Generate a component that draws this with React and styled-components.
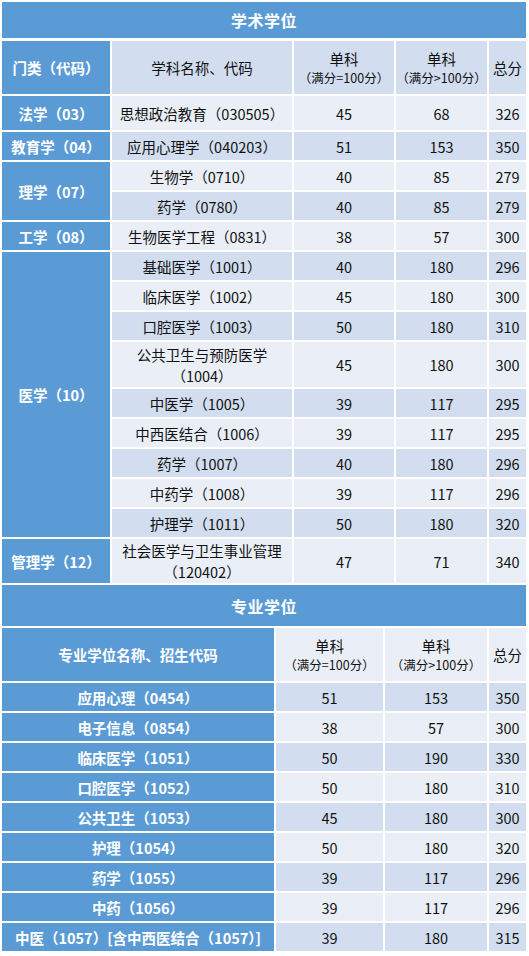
import React from "react";
import styled, { createGlobalStyle } from "styled-components";

const GlobalStyle = createGlobalStyle`
  html, body { margin: 0; padding: 0; background: #ffffff; }
  body { font-family: "Noto Sans CJK SC", "Noto Sans", sans-serif; }
`;

const BLUE = "#5b9bd5";
const DARK = "#d2deef";
const LIGHT = "#eaeff7";

const Page = styled.div`
  width: 524px;
  padding: 2px 0 0 2px;
  display: flex;
  flex-direction: column;
`;

const TitleBar = styled.div`
  height: ${(p) => p.$h}px;
  margin-bottom: ${(p) => p.$mb}px;
  background: ${BLUE};
  color: #ffffff;
  font-weight: 700;
  font-size: 16px;
  display: flex;
  align-items: center;
  justify-content: center;
  letter-spacing: 0.5px;
`;

const Grid = styled.div`
  display: grid;
  grid-template-columns: ${(p) => p.$cols};
  grid-template-rows: ${(p) => p.$rows};
  gap: 2px;
  margin-bottom: ${(p) => p.$mb || 0}px;
`;

const bg = { side: BLUE, head: DARK, head2: LIGHT, dark: DARK, light: LIGHT };

const Cell = styled.div`
  grid-row: ${(p) => (p.$span ? `span ${p.$span}` : "auto")};
  background: ${(p) => bg[p.$v]};
  color: ${(p) => (p.$v === "side" ? "#ffffff" : "#111111")};
  font-weight: ${(p) => (p.$v === "side" ? 700 : 400)};
  font-size: 14.5px;
  line-height: 21px;
  display: flex;
  flex-direction: column;
  align-items: center;
  justify-content: center;
  text-align: center;
  white-space: nowrap;
`;

const Main = styled.span`
  font-size: 14.5px;
  line-height: 21px;
`;

const Sub = styled.span`
  font-size: 12.5px;
  line-height: 18px;
`;

const HeadScore = ({ sign }) => (
  <>
    <Main>单科</Main>
    <Sub>（满分{sign}100分）</Sub>
  </>
);

const academic = [
  { side: "法学（03）", name: "思想政治教育（030505）", a: 45, b: 68, t: 326 },
  { side: "教育学（04）", name: "应用心理学（040203）", a: 51, b: 153, t: 350 },
  { side: "理学（07）", span: 2, name: "生物学（0710）", a: 40, b: 85, t: 279 },
  { name: "药学（0780）", a: 40, b: 85, t: 279 },
  { side: "工学（08）", name: "生物医学工程（0831）", a: 38, b: 57, t: 300 },
  { side: "医学（10）", span: 9, name: "基础医学（1001）", a: 40, b: 180, t: 296 },
  { name: "临床医学（1002）", a: 45, b: 180, t: 300 },
  { name: "口腔医学（1003）", a: 50, b: 180, t: 310 },
  { name: ["公共卫生与预防医学", "（1004）"], a: 45, b: 180, t: 300 },
  { name: "中医学（1005）", a: 39, b: 117, t: 295 },
  { name: "中西医结合（1006）", a: 39, b: 117, t: 295 },
  { name: "药学（1007）", a: 40, b: 180, t: 296 },
  { name: "中药学（1008）", a: 39, b: 117, t: 296 },
  { name: "护理学（1011）", a: 50, b: 180, t: 320 },
  { side: "管理学（12）", name: ["社会医学与卫生事业管理", "（120402）"], a: 47, b: 71, t: 340 },
];

const professional = [
  { side: "应用心理（0454）", a: 51, b: 153, t: 350 },
  { side: "电子信息（0854）", a: 38, b: 57, t: 300 },
  { side: "临床医学（1051）", a: 50, b: 190, t: 330 },
  { side: "口腔医学（1052）", a: 50, b: 180, t: 310 },
  { side: "公共卫生（1053）", a: 45, b: 180, t: 300 },
  { side: "护理（1054）", a: 50, b: 180, t: 320 },
  { side: "药学（1055）", a: 39, b: 117, t: 296 },
  { side: "中药（1056）", a: 39, b: 117, t: 296 },
  { side: "中医（1057）[含中西医结合（1057）]", a: 39, b: 180, t: 315 },
];

const rows1 = "53px 34px repeat(7, 28px) 45px repeat(5, 28px) 44px";
const rows2 = "53px repeat(9, 28px)";

export default function App() {
  return (
    <>
      <GlobalStyle />
      <Page>
        <TitleBar $h={36} $mb={3}>学术学位</TitleBar>
        <Grid $cols="108px 180px 100px 91px 37px" $rows={rows1} $mb={2}>
          <Cell $v="side">门类（代码）</Cell>
          <Cell $v="head">学科名称、代码</Cell>
          <Cell $v="head"><HeadScore sign="=" /></Cell>
          <Cell $v="head"><HeadScore sign=">" /></Cell>
          <Cell $v="head">总分</Cell>
          {academic.map((r, i) => {
            const v = i % 2 === 0 ? "light" : "dark";
            return (
              <React.Fragment key={i}>
                {r.side && (
                  <Cell $v="side" $span={r.span}>{r.side}</Cell>
                )}
                <Cell $v={v}>
                  {Array.isArray(r.name)
                    ? r.name.map((n) => <span key={n}>{n}</span>)
                    : r.name}
                </Cell>
                <Cell $v={v}>{r.a}</Cell>
                <Cell $v={v}>{r.b}</Cell>
                <Cell $v={v}>{r.t}</Cell>
              </React.Fragment>
            );
          })}
        </Grid>
        <TitleBar $h={41} $mb={2}>专业学位</TitleBar>
        <Grid $cols="272px 107px 102px 37px" $rows={rows2}>
          <Cell $v="side">专业学位名称、招生代码</Cell>
          <Cell $v="head2"><HeadScore sign="=" /></Cell>
          <Cell $v="head2"><HeadScore sign=">" /></Cell>
          <Cell $v="head2">总分</Cell>
          {professional.map((r, i) => {
            const v = i % 2 === 0 ? "dark" : "light";
            return (
              <React.Fragment key={i}>
                <Cell $v="side">{r.side}</Cell>
                <Cell $v={v}>{r.a}</Cell>
                <Cell $v={v}>{r.b}</Cell>
                <Cell $v={v}>{r.t}</Cell>
              </React.Fragment>
            );
          })}
        </Grid>
      </Page>
    </>
  );
}
